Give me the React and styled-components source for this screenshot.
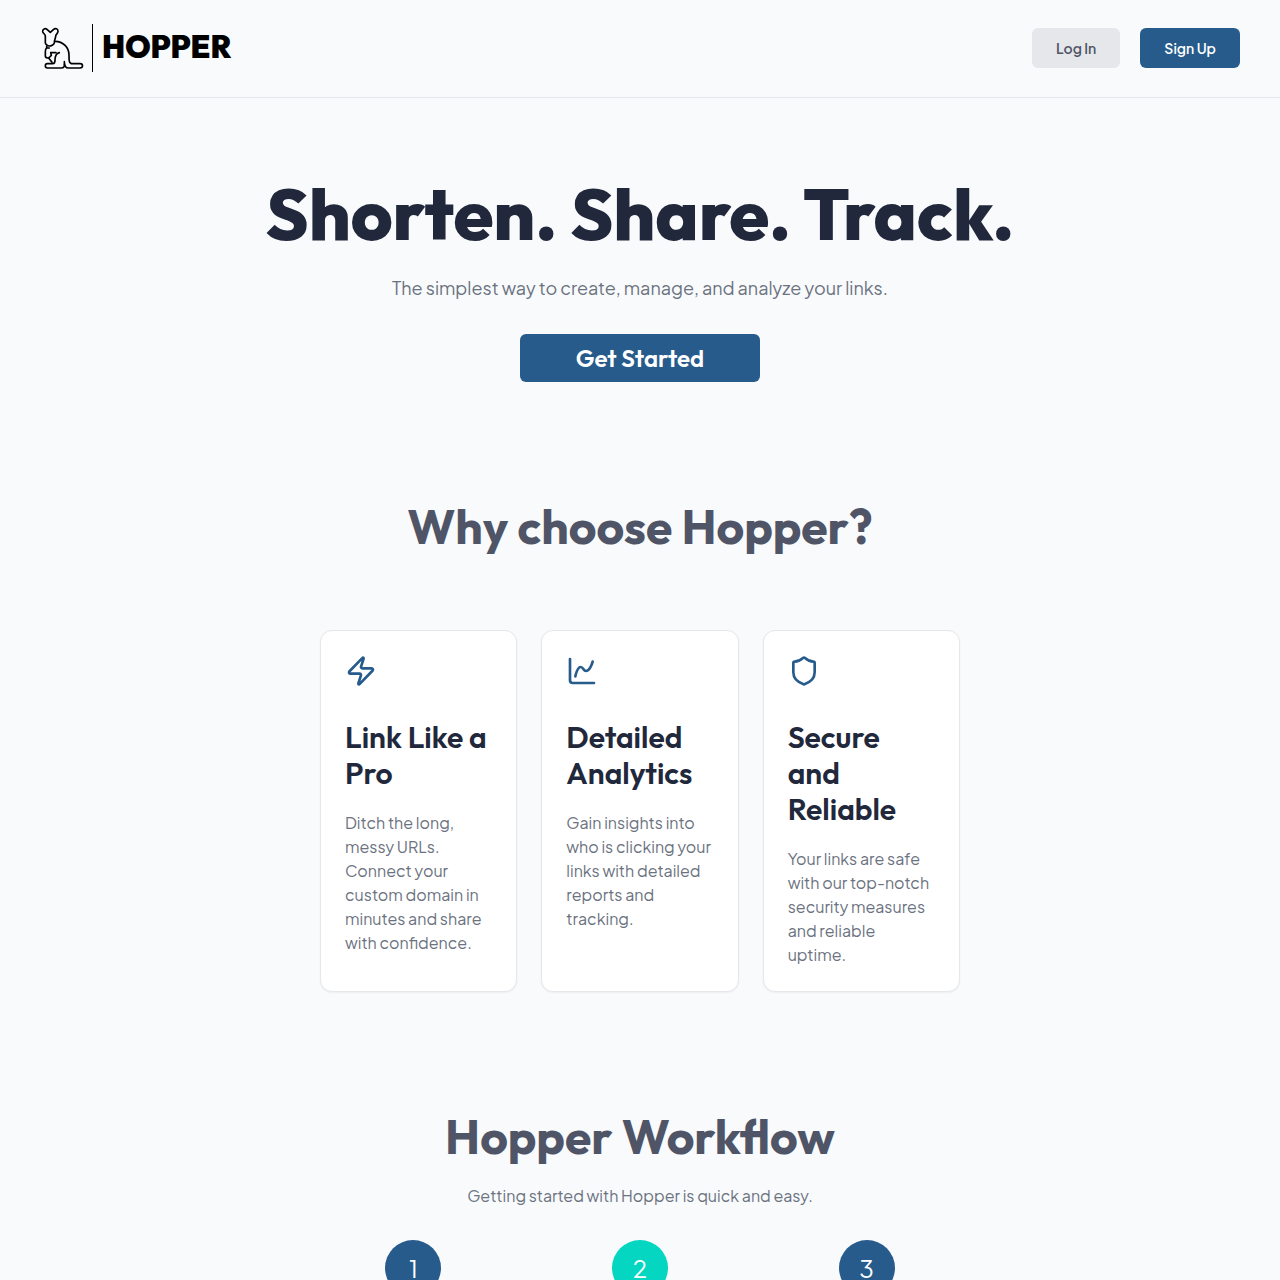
import React from "react";
import styled, { createGlobalStyle } from "styled-components";
import { Zap, ChartSpline, Shield } from "lucide-react";

export default function App() {
  const features = [
    {
      icon: Zap,
      title: "Link Like a Pro",
      text: "Ditch the long, messy URLs. Connect your custom domain in minutes and share with confidence.",
    },
    {
      icon: ChartSpline,
      title: "Detailed Analytics",
      text: "Gain insights into who is clicking your links with detailed reports and tracking.",
    },
    {
      icon: Shield,
      title: "Secure and Reliable",
      text: "Your links are safe with our top-notch security measures and reliable uptime.",
    },
  ];
  const steps = [
    { number: 1, color: "#265b8c" },
    { number: 2, color: "#04d6c1" },
    { number: 3, color: "#265b8c" },
  ];
  return (
    <>
      <GlobalStyle />
      <Header>
        <Logo href="/">
          <Kangaroo />
          <Divider />
          <Wordmark>HOPPER</Wordmark>
        </Logo>
        <Actions>
          <Button>Log In</Button>
          <Button $primary>Sign Up</Button>
        </Actions>
      </Header>
      <main>
        <Hero>
          <h1>Shorten. Share. Track.</h1>
          <p>The simplest way to create, manage, and analyze your links.</p>
          <StartButton>Get Started</StartButton>
        </Hero>
        <Section>
          <Heading>Why choose Hopper?</Heading>
          <Cards>
            {features.map(({ icon: Icon, title, text }) => {
              return (
                <Card key={title}>
                  <Icon size={32} color="#265b8c" />
                  <h3>{title}</h3>
                  <p>{text}</p>
                </Card>
              );
            })}
          </Cards>
        </Section>
        <Section>
          <Heading>Hopper Workflow</Heading>
          <Lead>Getting started with Hopper is quick and easy.</Lead>
          <Steps>
            {steps.map(({ number, color }) => {
              return (
                <li key={number}>
                  <StepNumber $color={color}>{number}</StepNumber>
                </li>
              );
            })}
          </Steps>
        </Section>
      </main>
    </>
  );
}

function Kangaroo() {
  return (
    <svg
      width="45"
      height="48"
      viewBox="30 27 135 144"
      fill="none"
      stroke="#000"
      strokeWidth="5"
      strokeLinecap="round"
      strokeLinejoin="round"
      aria-hidden="true"
    >
      <path d="M61 52 L51 43 C46 39 37 42 38 50 C39 56 46 57 46 63 V83 C46 87 53 93 58 93 C64 93 73 88 73 83 C72 76 77 71 77 64 C77 57 84 56 84 49 C84 41 76 39 71 43 Z" />
      <path d="M75 79 C100 79 117 98 117 120 C117 134 116 146 127 146 H150 C160 146 160 159 150 159 H116 C107 159 103 150 103 140" />
      <path d="M103 147 C104 155 101 159 94 159 H52 C44 159 44 146 52 146 H68 C73 146 75 142 75 136 C75 124 79 115 88 113" />
      <path d="M50 94 V99 H58 M50 99 C47 101 46 105 46 110 V122 C46 127 50 129 56 129 L66 142" />
      <path d="M78 113 H62 L64 121 L56 129" />
    </svg>
  );
}

const GlobalStyle = createGlobalStyle`
  * {
    box-sizing: border-box;
    margin: 0;
    padding: 0;
  }
  body {
    background-color: #f8fafc;
    color: #22283c;
    font-family: "Plus Jakarta Sans", Inter, sans-serif;
    font-size: 16px;
    line-height: 24px;
  }
  button {
    border: none;
    cursor: pointer;
    font-family: inherit;
  }
`;

const Header = styled.header`
  display: flex;
  justify-content: space-between;
  align-items: center;
  padding: 24px 40px 25px;
  border-bottom: 1px solid #e5e7eb;
`;

const Logo = styled.a`
  display: flex;
  align-items: center;
  color: #000;
  text-decoration: none;
`;

const Divider = styled.span`
  width: 1px;
  height: 48px;
  margin: 0 9px 0 7px;
  background-color: #000;
`;

const Wordmark = styled.span`
  padding-bottom: 2px;
  font-family: Outfit, Lato, sans-serif;
  font-size: 31px;
  font-weight: 900;
`;

const Actions = styled.div`
  display: flex;
  gap: 20px;
`;

const Button = styled.button`
  height: 40px;
  padding: 0 24px;
  border-radius: 6px;
  background-color: ${({ $primary }) => ($primary ? "#265b8c" : "#e5e7eb")};
  color: ${({ $primary }) => ($primary ? "#fff" : "#4f5567")};
  font-size: 14px;
  font-weight: 600;
`;

const Hero = styled.section`
  display: flex;
  flex-direction: column;
  align-items: center;
  padding: 80px 24px;
  text-align: center;
  h1 {
    font-family: Outfit, Lato, sans-serif;
    font-size: 72px;
    font-weight: 800;
    line-height: 72px;
  }
  p {
    margin: 24px 0 32px;
    color: #6b7280;
    font-size: 18px;
    line-height: 28px;
  }
`;

const StartButton = styled.button`
  width: 240px;
  height: 48px;
  border-radius: 6px;
  background-color: #265b8c;
  color: #fff;
  && {
    font-family: Outfit, Lato, sans-serif;
  }
  font-size: 24px;
  font-weight: 600;
`;

const Section = styled.section`
  display: flex;
  flex-direction: column;
  align-items: center;
  max-width: 640px;
  margin: 0 auto;
  padding: 40px 0 80px;
`;

const Heading = styled.h2`
  color: #4f5567;
  font-family: Outfit, Lato, sans-serif;
  font-size: 48px;
  font-weight: 700;
  line-height: 48px;
`;

const Cards = styled.div`
  display: grid;
  grid-template-columns: repeat(3, 1fr);
  gap: 24px;
  width: 100%;
  margin-top: 80px;
`;

const Card = styled.article`
  padding: 24px;
  border: 1px solid #e5e7eb;
  border-radius: 12px;
  background-color: #fff;
  box-shadow: 0 1px 2px rgba(0, 0, 0, 0.05);
  svg {
    display: block;
  }
  h3 {
    margin: 32px 0 20px;
    font-family: Outfit, Lato, sans-serif;
    font-size: 30px;
    font-weight: 600;
    line-height: 36px;
  }
  p {
    color: #6b7280;
  }
`;

const Lead = styled.p`
  margin: 24px 0 32px;
  color: #6b7280;
`;

const Steps = styled.ol`
  display: grid;
  grid-template-columns: repeat(3, 1fr);
  gap: 40px;
  width: 100%;
  list-style: none;
  li {
    display: flex;
    justify-content: center;
  }
`;

const StepNumber = styled.span`
  display: flex;
  align-items: center;
  justify-content: center;
  width: 56px;
  height: 56px;
  border-radius: 50%;
  background-color: ${({ $color }) => $color};
  color: #fff;
  font-size: 24px;
  font-weight: 400;
`;
